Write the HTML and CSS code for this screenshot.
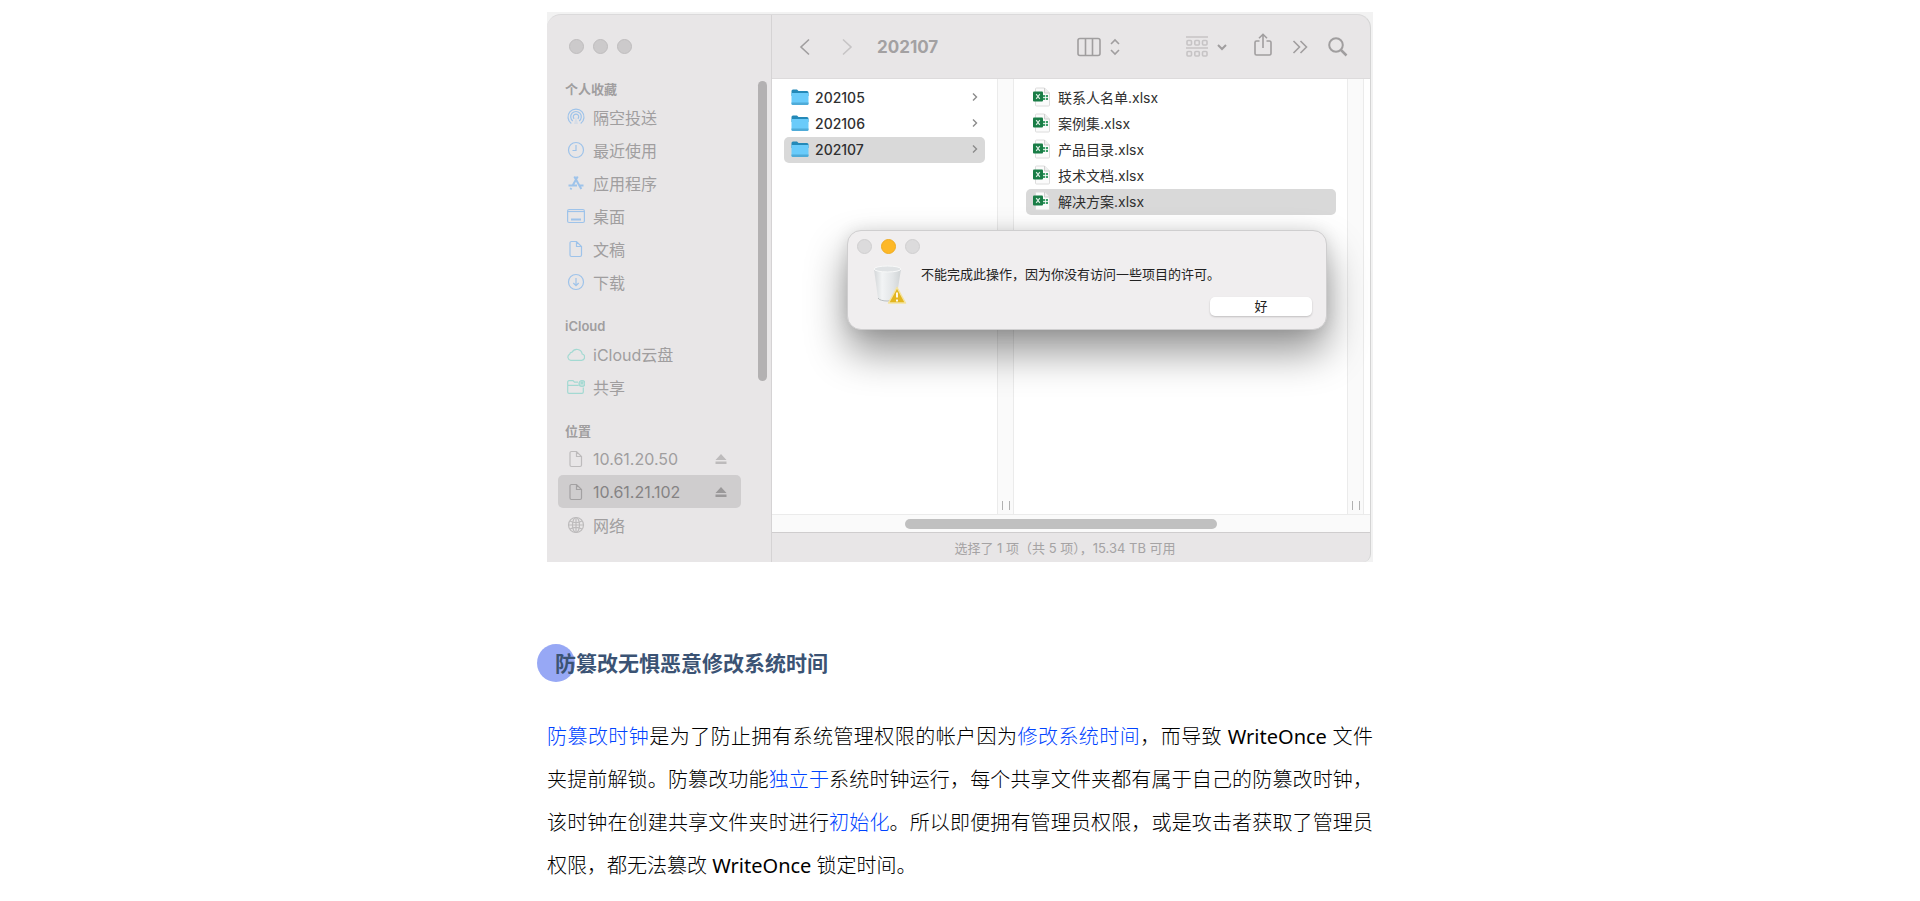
FILE: index.html
```html
<!DOCTYPE html>
<html lang="zh-CN">
<head>
    <meta charset="UTF-8">
    <meta name="viewport" content="width=device-width, initial-scale=1.0">
    <title>防篡改无惧恶意修改系统时间</title>
    <link rel="stylesheet" href="styles.css">
</head>
<body>
    <!-- Shared icons -->
    <svg class="sprite" aria-hidden="true">
        <symbol id="i-doc" viewBox="0 0 18 18">
            <path d="M4.5 1.5h5l5 5v8.500a1.500 1.500 0 0 1-1.500 1.500H4.500A1.500 1.500 0 0 1 3 15V3a1.500 1.500 0 0 1 1.500-1.500zM9.500 1.500v5h5"/>
        </symbol>
        <symbol id="i-eject" viewBox="0 0 12 12">
            <path d="M6 1l5.500 6H.5zM.5 8.500h11V11H.5z"/>
        </symbol>
        <symbol id="i-next" viewBox="0 0 6 10">
            <path d="M1 1.500L4.500 5 1 8.500"/>
        </symbol>
        <symbol id="i-folder" viewBox="0 0 18 18">
            <path d="M.5 3A1.500 1.500 0 0 1 2 1.500h4L7.500 3H16a1.500 1.500 0 0 1 1.500 1.500V8H.5z" fill="#2489b8"/>
            <path d="M.5 5h17v10.500a1.500 1.500 0 0 1-1.500 1.500H2a1.500 1.500 0 0 1-1.500-1.500z" fill="#6acbfa"/>
            <path d="M.5 14.500h17v1a1.500 1.500 0 0 1-1.500 1.500H2a1.500 1.500 0 0 1-1.500-1.500z" fill="#4fabd8"/>
        </symbol>
        <symbol id="i-xlsx" viewBox="0 0 18 20">
            <path d="M3.500 1h8L16.500 6v12a1 1 0 0 1-1 1h-12a1 1 0 0 1-1-1V2a1 1 0 0 1 1-1z" fill="#fbfbfb" stroke="#dcdcdc"/>
            <path d="M11.500 1v5h5" fill="#eee" stroke="#d0d0d0"/>
            <path d="M10 8h5v5h-5z" fill="#3e9d69"/>
            <path d="M10 10.500h5M12.500 8v5" stroke="#fff" stroke-width=".8"/>
            <rect x="0" y="4.500" width="10" height="10" rx="1" fill="#197d46"/>
            <path d="M3.200 7.200l3.600 4.600M6.800 7.200l-3.600 4.600" stroke="#d9ece1" stroke-width="1.200"/>
        </symbol>
    </svg>

    <main class="article">
        <figure class="shot">
            <div class="window">
                <aside class="sidebar">
                    <nav class="places">
                        <div class="lights">
                            <span class="light"></span>
                            <span class="light"></span>
                            <span class="light"></span>
                        </div>

                        <section class="group">
                            <h3 class="group-title">个人收藏</h3>
                            <a class="place" href="#">
                                <svg class="place-icon blue" viewBox="0 0 18 18"><path d="M4.300 15.500a8 8 0 1 1 9.400 0M5.800 13a5.300 5.300 0 1 1 6.400 0M7.200 10.800a2.700 2.700 0 1 1 3.600 0"/><path class="solid" d="M9 9l2 7H7z" fill-opacity=".25" stroke="none"/></svg>
                                <span>隔空投送</span>
                            </a>
                            <a class="place" href="#">
                                <svg class="place-icon blue" viewBox="0 0 18 18"><circle cx="9" cy="9" r="7.500"/><path d="M9 4v5.500H5.500"/></svg>
                                <span>最近使用</span>
                            </a>
                            <a class="place" href="#">
                                <svg class="place-icon blue bold" viewBox="0 0 18 18"><path d="M7.300 2.500l7 12.500M10.700 2.500L5.500 11.800M4.300 14l-.8 1.500M1.500 11.500h8.500M13 11.500h3.500"/></svg>
                                <span>应用程序</span>
                            </a>
                            <a class="place" href="#">
                                <svg class="place-icon blue" viewBox="0 0 18 18"><rect x=".6" y="2.500" width="16.800" height="13" rx="1.500"/><path d="M1 4.500h16" /><path d="M4 12.500h10" stroke-width="2"/></svg>
                                <span>桌面</span>
                            </a>
                            <a class="place" href="#">
                                <svg class="place-icon blue"><use href="#i-doc"/></svg>
                                <span>文稿</span>
                            </a>
                            <a class="place" href="#">
                                <svg class="place-icon blue" viewBox="0 0 18 18"><circle cx="9" cy="9" r="7.500"/><path d="M9 5v7.500M6.300 10L9 12.700 11.700 10"/></svg>
                                <span>下载</span>
                            </a>
                        </section>

                        <section class="group">
                            <h3 class="group-title">iCloud</h3>
                            <a class="place" href="#">
                                <svg class="place-icon teal" viewBox="0 0 18 18"><path d="M3.800 15.300h10.800a3.200 3.200 0 0 0 .6-6.300A5.500 5.500 0 0 0 5 7.200 2.500 2.500 0 0 0 2.600 9.300 3.200 3.200 0 0 0 3.800 15.300z"/></svg>
                                <span>iCloud云盘</span>
                            </a>
                            <a class="place" href="#">
                                <svg class="place-icon teal" viewBox="0 0 18 18"><path d="M11 4.200H7.500L6 2.700H2A1.300 1.300 0 0 0 .7 4v10A1.300 1.300 0 0 0 2 15.300h13a1.300 1.300 0 0 0 1.300-1.300V9.500M.7 7.300h11"/><circle class="solid" cx="15" cy="5.500" r="3" fill-opacity=".5"/><circle cx="15" cy="4.800" r=".8"/></svg>
                                <span>共享</span>
                            </a>
                        </section>

                        <section class="group">
                            <h3 class="group-title">位置</h3>
                            <a class="place" href="#">
                                <svg class="place-icon"><use href="#i-doc"/></svg>
                                <span>10.61.20.50</span>
                                <svg class="eject"><use href="#i-eject"/></svg>
                            </a>
                            <a class="place current" href="#">
                                <svg class="place-icon"><use href="#i-doc"/></svg>
                                <span>10.61.21.102</span>
                                <svg class="eject"><use href="#i-eject"/></svg>
                            </a>
                            <a class="place" href="#">
                                <svg class="place-icon" viewBox="0 0 18 18"><circle cx="9" cy="9" r="7.500"/><ellipse cx="9" cy="9" rx="3.500" ry="7.500"/><path d="M9 1.500v15M1.500 9h15M3 5c3.500 2 8.500 2 12 0M3 13c3.500-2 8.500-2 12 0"/></svg>
                                <span>网络</span>
                            </a>
                        </section>
                    </nav>
                    <div class="side-thumb"></div>
                </aside>

                <div class="pane">
                    <header class="toolbar">
                        <button class="tool" aria-label="后退"><svg width="12" height="18" viewBox="0 0 12 18"><path d="M10 1.500L2 9l8 7.500"/></svg></button>
                        <button class="tool dim" aria-label="前进"><svg width="12" height="18" viewBox="0 0 12 18"><path d="M2 1.500L10 9l-8 7.500"/></svg></button>
                        <h2 class="toolbar-title">202107</h2>
                        <div class="tools">
                            <button class="tool view" aria-label="显示方式">
                                <svg width="24" height="20" viewBox="0 0 24 20"><rect x="1" y="1.500" width="22" height="17" rx="2"/><path d="M8.500 1.500v17M15.500 1.500v17"/></svg>
                                <svg width="10" height="18" viewBox="0 0 10 18"><path d="M1 6l4-4 4 4M1 12l4 4 4-4"/></svg>
                            </button>
                            <button class="tool sort" aria-label="分组">
                                <svg class="dim" width="22" height="22" viewBox="0 0 22 22"><path d="M0 1h22M0 12h22"/><rect x="1" y="4.500" width="4.500" height="4.500" rx="1"/><rect x="8.800" y="4.500" width="4.500" height="4.500" rx="1"/><rect x="16.500" y="4.500" width="4.500" height="4.500" rx="1"/><rect x="1" y="15.500" width="4.500" height="4.500" rx="1"/><rect x="8.800" y="15.500" width="4.500" height="4.500" rx="1"/><rect x="16.500" y="15.500" width="4.500" height="4.500" rx="1"/></svg>
                                <svg width="10" height="8" viewBox="0 0 10 8"><path d="M1 2l4 4 4-4" stroke-width="2"/></svg>
                            </button>
                            <button class="tool share" aria-label="共享"><svg width="18" height="23" viewBox="0 0 18 23"><path d="M5.500 8H2.500A1.500 1.500 0 0 0 1 9.500v11A1.500 1.500 0 0 0 2.500 22h13a1.500 1.500 0 0 0 1.500-1.500v-11A1.500 1.500 0 0 0 15.500 8h-3M9 15V1.500M5 5.200L9 1.300l4 3.900"/></svg></button>
                            <button class="tool" aria-label="更多"><svg width="16" height="14" viewBox="0 0 16 14"><path d="M1.500 1l6 6-6 6M8.500 1l6 6-6 6"/></svg></button>
                            <button class="tool" aria-label="搜索"><svg width="20" height="20" viewBox="0 0 20 20"><circle cx="8" cy="8" r="6.800" stroke-width="2"/><path d="M13 13l5.500 5.500" stroke-width="2.500"/></svg></button>
                        </div>
                    </header>

                    <div class="columns">
                        <ul class="column folders">
                            <li><a class="row" href="#"><svg class="folder"><use href="#i-folder"/></svg><span>202105</span><svg class="next"><use href="#i-next"/></svg></a></li>
                            <li><a class="row" href="#"><svg class="folder"><use href="#i-folder"/></svg><span>202106</span><svg class="next"><use href="#i-next"/></svg></a></li>
                            <li><a class="row selected" href="#"><svg class="folder"><use href="#i-folder"/></svg><span>202107</span><svg class="next"><use href="#i-next"/></svg></a></li>
                        </ul>
                        <div class="splitter"></div>
                        <ul class="column files">
                            <li><a class="row" href="#"><svg class="xlsx"><use href="#i-xlsx"/></svg><span>联系人名单.xlsx</span></a></li>
                            <li><a class="row" href="#"><svg class="xlsx"><use href="#i-xlsx"/></svg><span>案例集.xlsx</span></a></li>
                            <li><a class="row" href="#"><svg class="xlsx"><use href="#i-xlsx"/></svg><span>产品目录.xlsx</span></a></li>
                            <li><a class="row" href="#"><svg class="xlsx"><use href="#i-xlsx"/></svg><span>技术文档.xlsx</span></a></li>
                            <li><a class="row selected" href="#"><svg class="xlsx"><use href="#i-xlsx"/></svg><span>解决方案.xlsx</span></a></li>
                        </ul>
                        <div class="splitter"></div>
                        <div class="column-rest"></div>
                    </div>

                    <div class="hscroll"><div class="hthumb"></div></div>
                    <footer class="status">选择了 1 项（共 5 项），15.34 TB 可用</footer>

                    <!-- Alert -->
                    <div class="alert" role="alertdialog" aria-labelledby="alertText">
                        <div class="lights">
                            <span class="light"></span>
                            <span class="light amber"></span>
                            <span class="light"></span>
                        </div>
                        <div class="alert-body">
                            <svg class="bin" width="34" height="40" viewBox="0 0 34 40">
                                <defs>
                                    <linearGradient id="binFill" x1="0" x2="1">
                                        <stop offset="0" stop-color="#d3d6d8"/>
                                        <stop offset=".3" stop-color="#f2f4f5"/>
                                        <stop offset=".7" stop-color="#e2e5e7"/>
                                        <stop offset="1" stop-color="#cfd3d5"/>
                                    </linearGradient>
                                </defs>
                                <path d="M1 4l4 29c.5 3 5 4 9 4s9-1 9.500-4L28 4z" fill="url(#binFill)"/>
                                <ellipse cx="14.500" cy="4" rx="13.500" ry="3" fill="#dfe2e4" stroke="#f8f9f9"/>
                                <path d="M5 33c2 4 16 4 18.500 0" fill="none" stroke="#b9bdbf"/>
                                <path d="M24 22.500L32.500 38h-17z" fill="#e3b520" stroke="#f4e3a0" stroke-width="1.500" stroke-linejoin="round"/>
                                <path d="M24 27.500v5M24 34.500v2" stroke="#fff" stroke-width="1.800"/>
                            </svg>
                            <p class="alert-text" id="alertText">不能完成此操作，因为你没有访问一些项目的许可。</p>
                        </div>
                        <button class="alert-btn">好</button>
                    </div>
                </div>
            </div>
        </figure>

        <h2 class="title">防篡改无惧恶意修改系统时间</h2>
        <p class="text"><em>防篡改时钟</em>是为了防止拥有系统管理权限的帐户因为<em>修改系统时间</em>，而导致 <span class="product">WriteOnce</span> 文件夹提前解锁。防篡改功能<em>独立于</em>系统时钟运行，每个共享文件夹都有属于自己的防篡改时钟，该时钟在创建共享文件夹时进行<em>初始化</em>。所以即便拥有管理员权限，或是攻击者获取了管理员权限，都无法篡改 <span class="product">WriteOnce</span> 锁定时间。</p>
    </main>
</body>
</html>
```
FILE: styles.css
```css
* {
    margin: 0;
    padding: 0;
    box-sizing: border-box;
}

body {
    font-family: 'Noto Sans', 'Noto Sans CJK SC', sans-serif;
    background: #fff;
    color: #000;
}

a {
    color: inherit;
    text-decoration: none;
}

button {
    border: none;
    background: none;
    font: inherit;
    cursor: pointer;
}

ul {
    list-style: none;
}

svg {
    display: block;
    flex: none;
}

.sprite {
    position: absolute;
    width: 0;
    height: 0;
}

.article {
    max-width: 826px;
    margin: 0 auto;
    padding-top: 12px;
}

/* Finder window */
.shot {
    background: #f2f2f2;
    padding: 2px 2px 0 0;
    margin-bottom: 80px;
}

.window {
    display: flex;
    font-family: Inter, 'Noto Sans CJK SC', sans-serif;
    background: #e8e6e7;
    border-top: 1px solid #dbdadb;
    border-right: 1px solid #d4d4d4;
    border-radius: 14px 14px 8px 0;
}

.lights {
    display: flex;
    gap: 9px;
}

.light {
    width: 15px;
    height: 15px;
    border-radius: 50%;
    background: #cccacb;
    border: 1px solid #bfbdbe;
}

/* Sidebar */
.sidebar {
    display: flex;
    align-items: flex-start;
    width: 225px;
    padding-right: 4px;
    border-right: 1px solid #d5d3d4;
    color: #a09e9f;
}

.places {
    flex: 1;
    padding: 24px 17px 21px 11px;
}

.places .lights {
    padding-left: 11px;
    margin-bottom: 24px;
}

.group {
    margin-bottom: 17px;
}

.group:last-child {
    margin-bottom: 0;
}

.group-title {
    padding-left: 7px;
    font-size: 13px;
    font-weight: 600;
    line-height: 22px;
}

.place {
    display: flex;
    align-items: center;
    gap: 8px;
    height: 33px;
    padding: 0 14px 0 9px;
    border-radius: 5px;
    font-size: 16px;
    font-weight: 400;
}

.place.current {
    background: #cfcdce;
    color: #858384;
}

.place-icon {
    width: 18px;
    height: 18px;
    fill: none;
    stroke: #bdbbbc;
    stroke-width: 1.2;
}

.place-icon.blue { stroke: #9ec3ea; }
.place-icon.teal { stroke: #a3d9d2; }
.place-icon.bold { stroke-width: 2; }
.place-icon.blue .solid { fill: #9ec3ea; }
.place-icon.teal .solid { fill: #a3d9d2; }
.current .place-icon { stroke: #a3a1a2; }

.eject {
    width: 12px;
    height: 12px;
    margin-left: auto;
    fill: #bdbbbc;
}

.current .eject {
    fill: #9a9899;
}

.side-thumb {
    width: 9px;
    height: 300px;
    margin-top: 66px;
    border-radius: 5px;
    background: #b3b1b2;
}

/* Main pane */
.pane {
    position: relative;
    flex: 1;
    display: flex;
    flex-direction: column;
}

.toolbar {
    display: flex;
    align-items: center;
    gap: 30px;
    height: 64px;
    padding: 0 22px 0 27px;
    border-bottom: 1px solid #dddbdc;
}

.tool {
    display: flex;
    align-items: center;
    gap: 9px;
}

.tool svg {
    fill: none;
    stroke: #a09e9f;
    stroke-width: 1.6;
}

.tool.dim svg,
.tool svg.dim {
    stroke: #c6c4c5;
}

.toolbar-title {
    margin-left: -6px;
    font-size: 17px;
    font-weight: 700;
    color: #a3a1a2;
}

.tools {
    display: flex;
    align-items: center;
    gap: 20px;
    margin-left: auto;
}

.view {
    margin-right: 46px;
}

.sort {
    margin-right: 7px;
}

.share {
    padding-bottom: 4px;
}

.columns {
    flex: 1;
    display: flex;
    background: #fff;
}

.column {
    padding: 6px 12px;
}

.folders {
    width: 225px;
}

.files {
    flex: 1;
    padding-right: 11px;
}

.row {
    display: flex;
    align-items: center;
    gap: 7px;
    height: 26px;
    padding: 0 7px 2px;
    border-radius: 5px;
    font-size: 14px;
    font-weight: 500;
    color: #303030;
}

.folders .row {
    gap: 6px;
}

.files .row {
    font-weight: 400;
}

.row.selected {
    background: #d9d9d9;
}

.folder {
    width: 18px;
    height: 18px;
}

.xlsx {
    width: 18px;
    height: 20px;
}

.next {
    width: 6px;
    height: 10px;
    margin-left: auto;
    fill: none;
    stroke: #8b8b8b;
    stroke-width: 1.4;
}

.splitter {
    display: flex;
    align-items: flex-end;
    justify-content: center;
    width: 17px;
    padding-bottom: 4px;
    background: #fafafa;
    border-left: 1px solid #ebebeb;
    border-right: 1px solid #ebebeb;
}

.splitter::after {
    content: '';
    width: 6px;
    height: 9px;
    border: solid #b0b0b0;
    border-width: 0 1px;
}

.column-rest {
    width: 6px;
}

.hscroll {
    height: 18px;
    padding: 4px 0 0 133px;
    background: #fafafa;
    border-top: 1px solid #ebebeb;
}

.hthumb {
    width: 67%;
    height: 10px;
    border-radius: 5px;
    background: #c0c0c0;
}

.status {
    height: 30px;
    padding-right: 12px;
    border-top: 1px solid #cfcdce;
    font-size: 13px;
    font-weight: 400;
    line-height: 31px;
    text-align: center;
    color: #a5a3a4;
}

/* Alert */
.alert {
    position: absolute;
    top: 215px;
    left: 75px;
    width: 480px;
    padding: 8px 14px 13px 9px;
    border: 1px solid #cfcecf;
    border-radius: 14px;
    background: #f0eeef;
    box-shadow: 0 22px 40px rgba(0, 0, 0, 0.42), 0 0 16px rgba(0, 0, 0, 0.1);
}

.alert .light {
    background: #dcdbdc;
    border-color: #d0cfd0;
}

.alert .light.amber {
    background: #fdb827;
    border-color: #eeac22;
}

.alert-body {
    display: flex;
    gap: 14px;
    padding: 11px 0 0 16px;
}

.bin {
    margin-bottom: -8px;
}

.alert-text {
    font-size: 13px;
    font-weight: 400;
    line-height: 19px;
    color: #222;
}

.alert-btn {
    display: block;
    width: 102px;
    height: 19px;
    margin-left: auto;
    border-radius: 5px;
    background: #fff;
    box-shadow: 0 1px 2px rgba(0, 0, 0, 0.2);
    font-size: 13px;
    line-height: 19px;
    color: #222;
}

/* Article text */
.title {
    position: relative;
    z-index: 0;
    margin-left: 8px;
    font-size: 21px;
    font-weight: 700;
    line-height: 42px;
    color: #3b5374;
}

.title::before {
    content: '';
    position: absolute;
    z-index: -1;
    top: 2px;
    left: -18px;
    width: 38px;
    height: 38px;
    border-radius: 50%;
    background: #97a8f5;
}

.text {
    margin-top: 31px;
    font-size: 20px;
    font-weight: 300;
    line-height: 43px;
    text-align: justify;
    color: #000;
}

.text em {
    font-style: normal;
    color: #0043ff;
}

.product {
    font-weight: 400;
}
```
